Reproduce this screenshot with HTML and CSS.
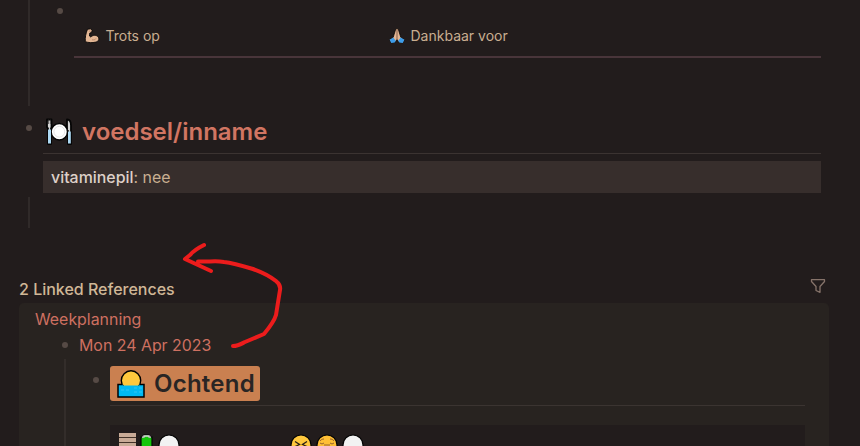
FILE: index.html
```html
<!DOCTYPE html>
<html lang="nl">
<head>
<meta charset="utf-8">
<title>Journal</title>
<link rel="stylesheet" href="styles.css">
</head>
<body>
<main class="page">
  <section class="children children-table">
    <span class="bullet"></span>
    <div class="table-head">
      <div class="cell">
        <svg class="emoji-small" viewBox="0 0 16 16"><path d="M3.500 1.200 6.800.8l1.300 1.600-.5 2.200-1.800.4-.3 3 1.300 1c2-2.200 6-2.300 7.600.2 1.200 2.400-.2 4.300-2.600 4.900-3.600.9-7.600.6-10.500-.4C.9 9.500 1.900 5 3.500 1.200Z" fill="#e3b694" stroke="#080606" stroke-width=".9"/><path d="M8 11.800c2 .3 3.400-.2 4-1.300M4.800 3l1.800.2" fill="none" stroke="#a9775a" stroke-width=".7"/></svg>
        <span>Trots op</span>
      </div>
      <div class="cell">
        <svg class="emoji-small" viewBox="0 0 16 16"><path d="M6.800.8h2.400l2.600 8.500 3.600 2.500-2 3-3.600-.7L8 11.500 6.200 14.100l-3.600.7-2-3 3.600-2.500Z" fill="#e3b694" stroke="#080606" stroke-width=".8"/><path d="M8 1.500v9.500" stroke="#714b3b" stroke-width=".8"/><path d="m.6 11.800 3.600-2.200 2.600 3.200-1.100 1.700-3.400.5ZM15.400 11.800l-3.600-2.200-2.600 3.200 1.100 1.700 3.400.5Z" fill="#3d9dea"/></svg>
        <span>Dankbaar voor</span>
      </div>
    </div>
  </section>

  <section class="block">
    <span class="bullet"></span>
    <div class="block-body">
      <h1 class="title">
        <svg class="plate" viewBox="0 0 28 28"><g stroke="#050505" stroke-linejoin="round"><path d="M2 1.500h4.500V9L6 10.500V26H3V10.500L2 9Z" fill="#d5d5d5" stroke-width="1.800"/><path d="M22 1.500c3 0 4 2 4 6V26h-3V13h-1Z" fill="#d0d0d0" stroke-width="1.800"/><circle cx="14.300" cy="13.700" r="8.200" fill="#fff" stroke-width="1.500"/></g><path d="M3 11.500h3v14H3ZM23 13.500h2.800v12H23Z" fill="#add9f3"/><path d="M3.500 1v5M5.300 1v5" stroke="#242020" stroke-width=".6"/><circle cx="14.300" cy="13.700" r="5.400" fill="none" stroke="#ddd" stroke-width=".8"/></svg>
        <span>voedsel/inname</span>
      </h1>
      <div class="properties"><span class="key">vitaminepil</span>: <span class="value">nee</span></div>
    </div>
  </section>
  <div class="children children-empty"></div>

  <header class="references-head">
    <h2>2 Linked References</h2>
    <svg class="filter" viewBox="0 0 16 16"><path d="M1.500 1.700h13v1.800L10 8.500v5.800L6 12.500v-4L1.500 3.500Z" fill="none" stroke="#86736a" stroke-width="1.300" stroke-linejoin="round"/></svg>
  </header>
  <section class="references">
    <a class="ref-page">Weekplanning</a>
    <div class="ref-date"><span class="bullet"></span><a>Mon 24 Apr 2023</a></div>
    <div class="ref-children">
      <span class="bullet"></span>
      <div class="ref-body">
        <div class="tag-row">
          <div class="tag">
            <svg class="sunrise" viewBox="0 0 28 28"><circle cx="14" cy="10.500" r="9.700" fill="#ffc83d" stroke="#000" stroke-width="1.400"/><path d="M1 14.500h4.500v1h17v-1H27V27H1Z" fill="#00b9f2"/><path d="M5 14.500H1V27h26V14.500h-4" fill="none" stroke="#000" stroke-width="1.500"/><path d="M4 20h3m2 0h3m5-2h3m2 0h3m-8 4h3m2 0h3" stroke="#50cdf5" stroke-width=".6"/></svg>
            <span>Ochtend</span>
          </div>
        </div>
        <div class="habits">
          <svg class="icon-stack" viewBox="0 0 18 18"><path d="M0 0h17v18H0Z" fill="#c9ab97"/><path d="M0 4.500h17M0 9.500h17M0 14h17" stroke="#443329" stroke-width="1.200"/></svg>
          <svg class="icon-battery" viewBox="0 0 14 18"><path d="M1 3h3V1h5v2h3v15H1Z" fill="#16c60c" stroke="#050505" stroke-width="1.200"/><path d="M2 3.200h2V2h5v1.200h2" fill="none" stroke="#ddd" stroke-width="1.300"/></svg>
          <svg class="icon-face" viewBox="0 0 22 22"><circle cx="11" cy="11" r="10" fill="#f2f2f2" stroke="#050505" stroke-width="1.200"/></svg>
          <svg class="icon-face face-pained" viewBox="0 0 22 22"><circle cx="11" cy="11" r="10" fill="#ffc83d" stroke="#050505" stroke-width="1.200"/><path d="m5 7.500 4.500 3-4.500 2m12-5-4.500 3 4.500 2" fill="none" stroke="#2b2117" stroke-width="1.300"/></svg>
          <svg class="icon-face" viewBox="0 0 22 22"><circle cx="11" cy="11" r="10" fill="#ffbf35" stroke="#050505" stroke-width="1.200"/><path d="M4 7c1-1.500 2.500-2 4-2m10 2c-1-1.500-2.500-2-4-2M4 9q2 2 4 0m6 0q2 2 4 0M8 11h6" fill="none" stroke="#98652b"/></svg>
          <svg class="icon-face" viewBox="0 0 22 22"><circle cx="11" cy="11" r="10" fill="#f2f2f2" stroke="#050505" stroke-width="1.200"/></svg>
        </div>
      </div>
    </div>
  </section>
  <svg class="arrow" viewBox="170 230 130 130"><path d="M233 346c5 0 8-2 12-4l19-8q10-12 12-19l4-25q1-5-4-9-9-7-23-12-20-6-29-7-6-1-14-.5h-12M204 245q-10 5-14 10l-5 4 26 12"/></svg>
</main>
</body>
</html>
```
FILE: styles.css
```css
* { box-sizing: border-box; }
body {
  margin: 0;
  background: #221c1c;
  color: #c9ae91;
  font-family: Inter, sans-serif;
  font-size: 15.9px;
}
svg { display: block; flex: none; }
h1, h2 { margin: 0; }
.page {
  position: relative;
  height: 446px;
  overflow: hidden;
  padding: 0 31px 0 19px;
}
.bullet {
  display: block;
  flex: none;
  width: 6px;
  height: 6px;
  border-radius: 50%;
  background: #564a45;
}
.children {
  margin-left: 9px;
  border-left: 2px solid #302a29;
}
.children-table {
  display: flex;
  height: 106px;
  padding: 8px 8px 0 27px;
}
.table-head {
  display: grid;
  grid-template-columns: 305px 1fr;
  flex: 1;
  height: 50px;
  margin-left: 11px;
  border-bottom: 2px solid #49353a;
}
.cell {
  display: flex;
  align-items: center;
  gap: 6px;
  height: 40px;
  padding: 16px 0 0 9.5px;
  font-size: 14px;
  line-height: 24px;
}
.emoji-small { width: 16px; height: 16px; }
.block { display: flex; padding: 19px 8px 0 7px; }
.block-body { flex: 1; margin-left: 11px; }
.title {
  display: flex;
  align-items: center;
  gap: 9px;
  height: 39px;
  margin-top: -10px;
  padding-left: 2px;
  border-bottom: 1px solid #3b3331;
  color: #d17562;
  font-size: 24px;
  font-weight: 600;
  line-height: 32px;
}
.title span { padding-bottom: 4px; }
.plate { width: 28px; height: 28px; margin-bottom: 5px; }
.properties {
  height: 32px;
  margin-top: 7px;
  padding-left: 8px;
  background: #372e2c;
  line-height: 33px;
}
.key { color: #ded0c8; font-weight: 500; }
.children-empty { height: 31px; margin-top: 4px; }
.references-head {
  display: flex;
  justify-content: space-between;
  height: 25px;
  margin-top: 50px;
}
.references-head h2 {
  color: #d0b797;
  font-size: 16px;
  font-weight: 500;
  line-height: 22px;
}
.filter { width: 16px; height: 16px; margin-right: 3px; }
.references {
  height: 160px;
  padding: 5px 24px 0 16px;
  border-radius: 5px;
  background: #282320;
}
.ref-page { display: block; height: 23px; line-height: 24px; }
.ref-page, .ref-date { color: #ce7060; }
.ref-date {
  display: flex;
  align-items: center;
  gap: 11px;
  height: 28px;
  padding-left: 27px;
}
.ref-children {
  display: flex;
  height: 100px;
  margin-left: 29px;
  padding-left: 27px;
  border-left: 2px solid #332d2a;
}
.ref-children > .bullet { margin-top: 18px; }
.ref-body { flex: 1; margin-left: 11px; }
.tag-row { height: 47px; padding-top: 7px; border-bottom: 1px solid #3b3431; }
.tag {
  display: flex;
  align-items: center;
  gap: 9px;
  width: 150px;
  height: 35px;
  padding-left: 7px;
  border-radius: 3px;
  background: #ca8050;
  color: #292524;
  font-size: 24px;
  font-weight: 600;
  letter-spacing: .25px;
}
.sunrise { width: 28px; height: 28px; }
.habits {
  display: flex;
  height: 40px;
  margin-top: 19px;
  padding: 8px 0 0 9px;
  background: #221c1c;
}
.icon-stack { width: 18px; height: 18px; }
.icon-battery { width: 14px; height: 18px; margin: 1px 3px 0; }
.icon-face { width: 22px; height: 22px; margin: 1px 3px 0 1px; }
.face-pained { margin-left: 107px; }
.arrow {
  position: absolute;
  left: 170px;
  top: 230px;
  width: 130px;
  height: 130px;
  fill: none;
  stroke: #ec1c1c;
  stroke-width: 4;
  stroke-linecap: round;
  stroke-linejoin: round;
}
```
